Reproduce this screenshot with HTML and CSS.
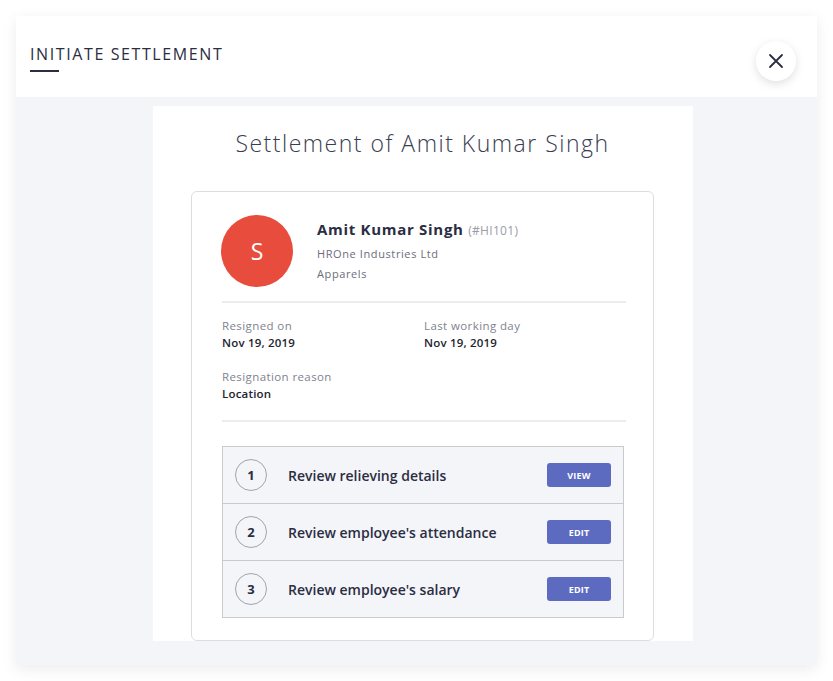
FILE: index.html
```html
<!DOCTYPE html>
<html lang="en">
<head>
  <meta charset="UTF-8" />
  <title>Initiate Settlement</title>
  <meta name="viewport" content="width=device-width, initial-scale=1.0" />
  <link rel="stylesheet" href="styles.css">
</head>
<body>
  <div class="modal">
    <div class="modal-head">
      <h1 class="modal-title">INITIATE SETTLEMENT</h1>
      <button class="close-btn" aria-label="Close">
        <svg width="16" height="16" viewBox="0 0 16 16">
          <path d="M2 2 L14 14 M14 2 L2 14" stroke="#2b2d42" stroke-width="1.8" stroke-linecap="round" fill="none"/>
        </svg>
      </button>
    </div>
    <div class="modal-body">
      <div class="sheet">
        <h2 class="sheet-title">Settlement of Amit Kumar Singh</h2>
        <div class="card">
          <div class="emp">
            <div class="avatar">S</div>
            <div class="emp-info">
              <div class="emp-name">Amit Kumar Singh <span class="emp-code">(#HI101)</span></div>
              <div class="emp-meta">HROne Industries Ltd</div>
              <div class="emp-meta">Apparels</div>
            </div>
          </div>

          <div class="details">
            <div class="field">
              <div class="label">Resigned on</div>
              <div class="value">Nov 19, 2019</div>
            </div>
            <div class="field">
              <div class="label">Last working day</div>
              <div class="value">Nov 19, 2019</div>
            </div>
            <div class="field">
              <div class="label">Resignation reason</div>
              <div class="value">Location</div>
            </div>
          </div>

          <div class="steps">
            <div class="step">
              <span class="step-num">1</span>
              <span class="step-text">Review relieving details</span>
              <button class="step-btn">VIEW</button>
            </div>
            <div class="step">
              <span class="step-num">2</span>
              <span class="step-text">Review employee's attendance</span>
              <button class="step-btn">EDIT</button>
            </div>
            <div class="step">
              <span class="step-num">3</span>
              <span class="step-text">Review employee's salary</span>
              <button class="step-btn">EDIT</button>
            </div>
          </div>
        </div>
      </div>
    </div>
  </div>
</body>
</html>
```

FILE: styles.css
```css
* {
  box-sizing: border-box;
}
body {
  margin: 0;
  background: #fff;
  font-family: "Open Sans", "DejaVu Sans", sans-serif;
  color: #2b2d42;
  height: 100vh;
  overflow: hidden;
}
.modal {
  margin: 16px;
  height: 649px;
  display: flex;
  flex-direction: column;
  background: #f4f5f9;
  box-shadow: 0 4px 14px rgba(0, 0, 0, 0.08);
}
.modal-head {
  height: 81px;
  background: #fff;
  display: flex;
  align-items: flex-start;
  justify-content: space-between;
  padding: 0 21px 0 14px;
  flex-shrink: 0;
}
.modal-title {
  margin: 27px 0 0;
  font-size: 16px;
  font-weight: 500;
  letter-spacing: 1.6px;
  color: #2b2d42;
  position: relative;
  padding-bottom: 7px;
}
.modal-title::after {
  content: "";
  position: absolute;
  left: 0;
  bottom: 0;
  width: 29px;
  height: 2px;
  background: #2b2d42;
}
.close-btn {
  margin-top: 25px;
  width: 40px;
  height: 40px;
  border-radius: 50%;
  border: none;
  background: #fff;
  box-shadow: 0 3px 10px rgba(0, 0, 0, 0.12);
  display: flex;
  align-items: center;
  justify-content: center;
  padding: 0;
  cursor: pointer;
}
.modal-body {
  flex: 1;
  display: flex;
  justify-content: center;
  padding-top: 9px;
  padding-bottom: 24px;
  overflow: hidden;
}
.sheet {
  width: 540px;
  margin-left: 12px;
  background: #fff;
  display: flex;
  flex-direction: column;
  align-items: center;
  overflow: hidden;
}
.sheet-title {
  margin: 21px 0 0;
  font-size: 23px;
  font-weight: 300;
  color: #3a3d4f;
  letter-spacing: 1.5px;
}
.card {
  margin-top: 32px;
  width: 463px;
  flex: 1;
  border: 1px solid #dcdde2;
  border-radius: 6px;
  padding: 23px 27px 0 30px;
}
.emp {
  display: flex;
  align-items: flex-start;
  padding-bottom: 14px;
  border-bottom: 2px solid #ececef;
}
.avatar {
  width: 72px;
  height: 72px;
  margin-left: -1px;
  border-radius: 50%;
  background: #e84c3d;
  color: #fff;
  font-size: 23px;
  display: flex;
  align-items: center;
  justify-content: center;
  flex-shrink: 0;
}
.emp-info {
  margin-left: 24px;
  padding-top: 4px;
}
.emp-name {
  font-size: 15px;
  font-weight: 700;
  letter-spacing: 0.7px;
  color: #2b2d42;
  margin-bottom: 5px;
}
.emp-code {
  font-size: 12px;
  font-weight: 400;
  letter-spacing: 0.3px;
  color: #9a9ca8;
}
.emp-meta {
  font-size: 11px;
  letter-spacing: 0.6px;
  color: #6b6e7c;
  line-height: 20px;
}
.details {
  display: grid;
  grid-template-columns: 202px 1fr;
  row-gap: 17px;
  padding: 14px 0 18px;
  border-bottom: 2px solid #ececef;
}
.label {
  font-size: 11.5px;
  letter-spacing: 0.4px;
  color: #7f8290;
  line-height: 17px;
}
.value {
  font-size: 11.5px;
  font-weight: 600;
  letter-spacing: 0.2px;
  color: #22242f;
  line-height: 17px;
}
.steps {
  margin-top: 24px;
  border: 1px solid #c9cace;
  background: #f4f5f9;
  width: 402px;
}
.step {
  height: 57px;
  display: flex;
  align-items: center;
  padding: 0 12px 0 12px;
  border-top: 1px solid #c9cace;
}
.step:first-child {
  height: 56px;
  border-top: none;
}
.step-num {
  width: 32px;
  height: 32px;
  border: 1px solid #a3a4aa;
  border-radius: 50%;
  display: flex;
  align-items: center;
  justify-content: center;
  font-size: 13px;
  font-weight: 700;
  color: #2b2d42;
  flex-shrink: 0;
}
.step-text {
  margin-left: 21px;
  flex: 1;
  font-size: 14px;
  font-weight: 600;
  color: #2b2d42;
}
.step-btn {
  width: 64px;
  height: 24px;
  border: none;
  border-radius: 3px;
  background: #5c6bc0;
  color: #fff;
  font-family: "Open Sans", sans-serif;
  font-size: 9px;
  font-weight: 700;
  letter-spacing: 0.2px;
  cursor: pointer;
}
```
